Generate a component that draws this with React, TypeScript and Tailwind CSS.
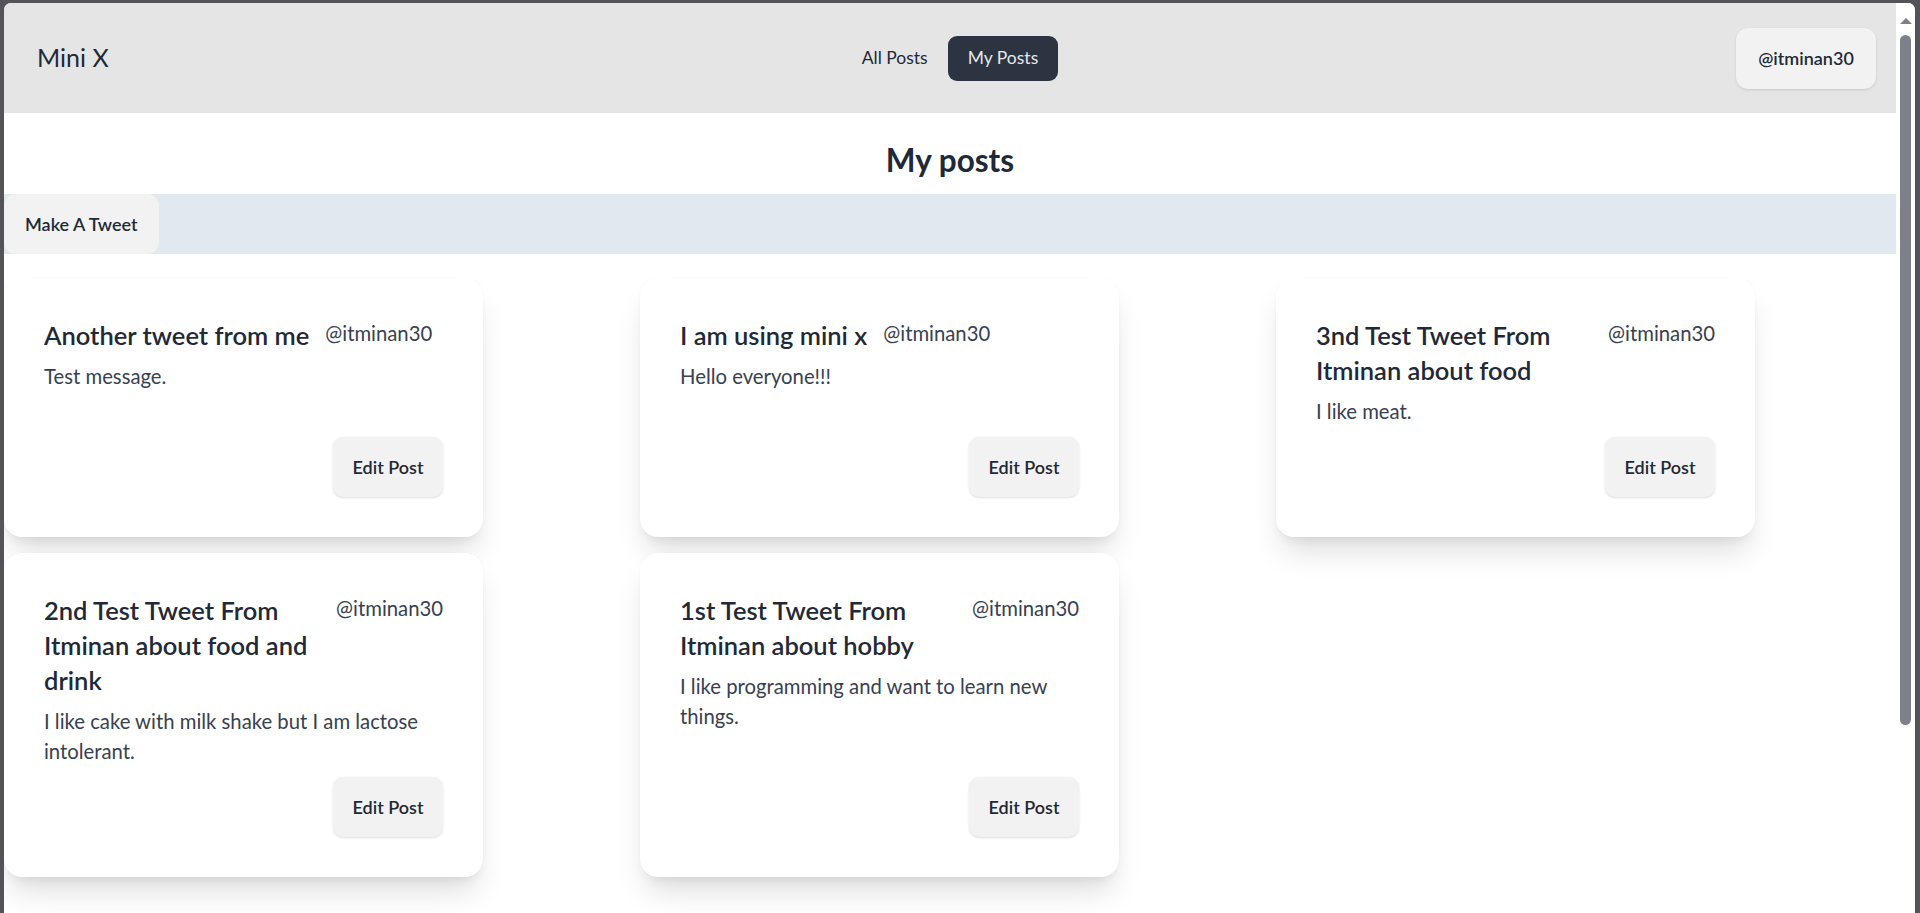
const posts = [
  {
    title: "Another tweet from me",
    body: "Test message.",
  },
  {
    title: "I am using mini x",
    body: "Hello everyone!!!",
  },
  {
    title: "3nd Test Tweet From Itminan about food",
    body: "I like meat.",
  },
  {
    title: "2nd Test Tweet From Itminan about food and drink",
    body: "I like cake with milk shake but I am lactose intolerant.",
  },
  {
    title: "1st Test Tweet From Itminan about hobby",
    body: "I like programming and want to learn new things.",
  },
];

function PostCard({ title, body }: { title: string; body: string }) {
  return (
    <div className="flex flex-col rounded-[18px] bg-white p-10 shadow-[0_20px_30px_-6px_rgba(0,0,0,0.13),0_8px_12px_-6px_rgba(0,0,0,0.08),0_0_2px_rgba(0,0,0,0.04)]">
      <div className="flex items-start gap-4">
        <h2 className="text-[25.5px] leading-[35px] font-semibold text-[#1f2937]">{title}</h2>
        <span className="mt-[1px] shrink-0 text-[20.3px] leading-[28px] text-[#374151]">@itminan30</span>
      </div>
      <p className="mt-2 text-[20.3px] leading-[30px] text-[#374151]">{body}</p>
      <div className="mt-auto flex justify-end pt-[11px]">
        <button className="h-[60px] w-[110px] rounded-[10px] bg-[#f2f2f2] text-[18px] font-semibold text-[#1f2937] shadow-sm">
          Edit Post
        </button>
      </div>
    </div>
  );
}

export default function App() {
  return (
    <div
      className="flex h-[913px] w-full overflow-hidden bg-[#545458] pt-[3px] pr-[5px] pl-[4px]"
      style={{ fontFamily: "Lato, 'Noto Sans', sans-serif" }}
    >
      <div className="flex flex-1 overflow-hidden rounded-t-[7px] bg-white">
        <div className="flex flex-1 flex-col">
          {/* top bar */}
          <header className="grid h-[110px] shrink-0 grid-cols-[1fr_auto_1fr] items-center bg-[#e5e5e5] px-5">
            <span className="ml-[13px] text-[25px] text-[#1f2937]">Mini X</span>
            <nav className="flex">
              <button className="h-[45px] px-5 text-[17.5px] text-[#1f2937]">All Posts</button>
              <button className="h-[45px] rounded-[9px] bg-[#2d3441] px-5 text-[17.5px] text-[#e5e7eb]">
                My Posts
              </button>
            </nav>
            <div className="flex justify-end">
              <button className="h-[61px] w-[140px] rounded-[12px] bg-[#f2f2f2] text-[18px] font-semibold text-[#1f2937] shadow-sm">
                @itminan30
              </button>
            </div>
          </header>

          <div className="flex h-[81px] shrink-0 items-center justify-center pt-[14px]">
            <h1 className="text-[31.5px] font-bold text-[#1f2937]">My posts</h1>
          </div>

          <div className="flex h-[60px] shrink-0 bg-[#e2e8f0]">
            <button className="h-full rounded-[12px] bg-[#f2f2f2] px-[21px] text-[18px] font-semibold text-[#1f2937]">
              Make A Tweet
            </button>
          </div>

          <div className="mt-6 grid grid-cols-[479px_479px_479px] gap-x-[157px] gap-y-4">
            {posts.map((p) => (
              <PostCard key={p.title} title={p.title} body={p.body} />
            ))}
          </div>
        </div>

        {/* fake scrollbar */}
        <div className="flex w-[19px] shrink-0 flex-col items-center bg-white pt-[15px]">
          <div className="h-0 w-0 border-x-[6px] border-b-[6px] border-x-transparent border-b-[#7d8088]" />
          <div className="mt-[11px] h-[690px] w-[11px] rounded-full bg-[#7d8088]" />
        </div>
      </div>
    </div>
  );
}
